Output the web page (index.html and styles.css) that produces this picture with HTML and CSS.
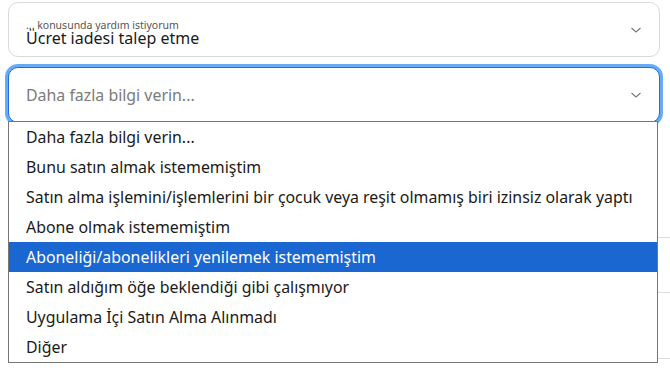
FILE: index.html
```html
<!DOCTYPE html>
<html lang="tr">
<head>
<meta charset="utf-8">
<link rel="stylesheet" href="styles.css">
</head>
<body>
<div class="page">
  <div class="field field-filled">
    <div class="field-text">
      <div class="field-label">... konusunda yardım istiyorum</div>
      <div class="field-value">Ücret iadesi talep etme</div>
    </div>
    <svg class="chev" width="12" height="8" viewBox="0 0 12 8"><path d="M1.5 2 L6 6 L10.5 2" fill="none" stroke="#7a7a7a" stroke-width="1.2"/></svg>
  </div>
  <div class="select-wrap">
    <div class="field field-focus">
      <div class="field-placeholder">Daha fazla bilgi verin...</div>
      <svg class="chev" width="12" height="8" viewBox="0 0 12 8"><path d="M1.5 2 L6 6 L10.5 2" fill="none" stroke="#7a7a7a" stroke-width="1.2"/></svg>
    </div>
    <div class="behind">
      <div class="behind-row r1"></div>
      <div class="behind-row r2"></div>
      <div class="behind-row r3"></div>
    </div>
    <ul class="list">
      <li>Daha fazla bilgi verin...</li>
      <li>Bunu satın almak istememiştim</li>
      <li>Satın alma işlemini/işlemlerini bir çocuk veya reşit olmamış biri izinsiz olarak yaptı</li>
      <li>Abone olmak istememiştim</li>
      <li class="active">Aboneliği/abonelikleri yenilemek istememiştim</li>
      <li>Satın aldığım öğe beklendiği gibi çalışmıyor</li>
      <li>Uygulama İçi Satın Alma Alınmadı</li>
      <li>Diğer</li>
    </ul>
  </div>
</div>
</body>
</html>
```

FILE: styles.css
```css
html, body {
  margin: 0;
  padding: 0;
  background: #ffffff;
}
body {
  font-family: "Noto Sans", "Open Sans", sans-serif;
  color: #1f1f1f;
  width: 670px;
  height: 374px;
  overflow: hidden;
}
.page {
  padding: 2px 10px 0 8px;
}
.field {
  display: flex;
  align-items: center;
  justify-content: space-between;
  box-sizing: border-box;
  border-radius: 10px;
  background: #fff;
}
.field-filled {
  height: 55px;
  border: 1px solid #dadada;
  padding: 0 17px 0 17px;
}
.field-text {
  display: flex;
  flex-direction: column;
  padding-top: 7px;
}
.field-label {
  font-size: 10.5px;
  color: #555;
  line-height: 12px;
}
.field-value {
  font-size: 16px;
  line-height: 19px;
  margin-top: -2px;
  color: #1a1a1a;
}
.chev {
  display: block;
}
.select-wrap {
  position: relative;
  margin-top: 10px;
}
.field-focus {
  height: 56px;
  border: 1px solid #1c6fdc;
  box-shadow: 0 0 0 3px #66abf4;
  padding: 0 17px 0 17px;
}
.field-placeholder {
  font-size: 15.9px;
  color: #7b7b7b;
}
.behind {
  margin-right: -10px;
}
.behind-row {
  border-bottom: 1px solid #dcdcdc;
}
.r1 { height: 114px; }
.r2 { height: 54px; }
.r3 { height: 65px; }
.list {
  position: absolute;
  left: 0;
  top: 54px;
  width: 650px;
  margin: 0;
  padding: 0;
  list-style: none;
  background: #fff;
  border: 1px solid #767676;
  box-sizing: border-box;
}
.list li {
  height: 30px;
  line-height: 30px;
  padding-left: 17px;
  font-size: 15.9px;
  color: #1a1a1a;
  white-space: nowrap;
}
.list li.active {
  background: #1a67d2;
  color: #ffffff;
}
```
